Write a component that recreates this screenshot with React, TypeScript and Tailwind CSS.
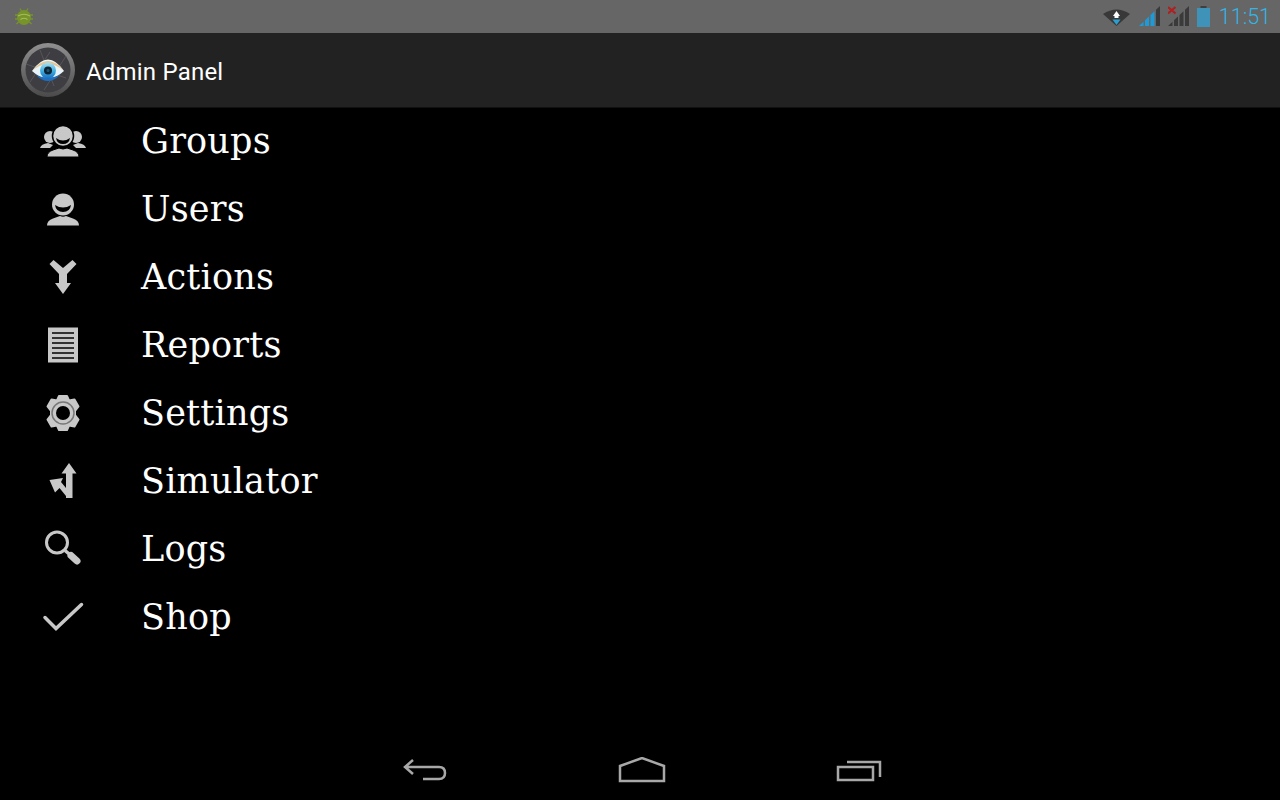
import type { ReactNode } from "react";

const GREY = "#c8c8c8";

function BugIcon() {
  return (
    <svg width="20" height="20" viewBox="0 0 20 20">
      <g stroke="#76942a" strokeWidth="1.300">
        <path d="M6 1.500 8 5M14 1.500 12 5M1 8h3M16 8h3M1 12h3M16 12h3M2.500 17l2.500-2.500M17.500 17 15 14.500" />
      </g>
      <ellipse cx="10" cy="10.500" rx="7" ry="7.500" fill="#76942a" />
      <path d="M4 9q6-3.500 12 0M6.500 12.500q3.500-2.500 7 0" stroke="#a6bc5c" strokeWidth="1.100" fill="none" />
    </svg>
  );
}

function WifiIcon() {
  return (
    <svg width="27" height="18" viewBox="0 0 27 18">
      <path d="M0 6Q13.500-3 27 6L13.500 18Z" fill="#383838" />
      <path d="M13.500 3l-3.500 5h7Z" fill="#fff" />
      <rect x="11.500" y="8" width="4" height="2" fill="#fff" />
      <path d="M13.500 17l-4-5.500h8Z" fill="#2a9fd0" />
    </svg>
  );
}

const bars = [
  { x0: 0, x1: 4.5 },
  { x0: 6, x1: 10 },
  { x0: 11.5, x1: 15.5 },
  { x0: 17, x1: 21 },
];

function SignalIcon({ active, x }: { active: boolean; x?: boolean }) {
  return (
    <svg width="21" height="21" viewBox="0 0 21 21">
      {bars.map((b, i) => (
        <path
          key={b.x0}
          d={`M${b.x0} 20L${b.x0} ${20 - b.x0 * 0.95}L${b.x1} ${20 - b.x1 * 0.95}L${b.x1} 20Z`}
          fill={active && i < 3 ? "#1e9ad6" : "#3a3a3a"}
        />
      ))}
      {x && <path d="M0 1l7.500 6.500M7.500 1 0 7.500" stroke="#b02020" strokeWidth="2.200" />}
    </svg>
  );
}

function BatteryIcon() {
  return (
    <svg width="13" height="21" viewBox="0 0 13 21">
      <rect x="3.500" y="0" width="6" height="3" fill="#3f3f3f" />
      <rect x="0" y="2" width="13" height="19" fill="#3f93b8" />
    </svg>
  );
}

function AppLogo() {
  return (
    <svg width="56" height="56" viewBox="0 0 56 56">
      <defs>
        <linearGradient id="ring" x1="0" y1="0" x2="0" y2="1">
          <stop offset="0" stopColor="#909090" />
          <stop offset="1" stopColor="#4a4a4a" />
        </linearGradient>
        <linearGradient id="iris" x1="0" y1="0" x2="0" y2="1">
          <stop offset="0" stopColor="#a8e2f4" />
          <stop offset="0.600" stopColor="#35a5dc" />
          <stop offset="1" stopColor="#1f6fc0" />
        </linearGradient>
      </defs>
      <circle cx="28" cy="28" r="27" fill="url(#ring)" />
      <circle cx="28" cy="28" r="22.500" fill="#3e3e42" />
      <path d="M10 40 30 10M20 8l14 36M46 14 24 48M6 22l40 14" stroke="#55555a" strokeWidth="1" />
      <path d="M12 29Q28 6 44 29Q28 44 12 29Z" fill="#e6f4fa" />
      <path d="M12 29Q28 9 44 29Q28 15 12 29Z" fill="#e8c48e" />
      <path d="M16 33Q28 45 40 33Q28 38 16 33Z" fill="#1f6fc0" />
      <circle cx="28" cy="28.500" r="8" fill="url(#iris)" />
      <circle cx="28" cy="28.500" r="4" fill="#0e2230" />
      <circle cx="28" cy="28.500" r="1.500" fill="#1a567c" />
    </svg>
  );
}

function GroupsIcon() {
  return (
    <svg width="48" height="36" viewBox="0 0 48 36" fill={GREY}>
      <circle cx="11" cy="14" r="6" />
      <circle cx="37" cy="14" r="6" />
      <path d="M1 25q1-4 8-5l5 2-3 3Z" />
      <path d="M47 25q-1-4-8-5l-5 2 3 3Z" />
      <circle cx="24" cy="13" r="10.500" stroke="#000" strokeWidth="1.500" />
      <path d="M17 15q7 5 14 0q-1 6-7 6t-7-6Z" fill="#000" />
      <path d="M8 34q0-5 6-7l6-2q4 2 8 0l6 2q6 2 6 7Z" stroke="#000" strokeWidth="1" />
    </svg>
  );
}

function UserIcon() {
  return (
    <svg width="36" height="36" viewBox="0 0 36 36" fill={GREY}>
      <circle cx="18" cy="13.500" r="11" />
      <path d="M10 14q8 5 16 0q-1 7-8 7t-8-7Z" fill="#000" />
      <path d="M2 34.500q0-5 6-7l7-2.500q3 1.500 6 0l7 2.500q6 2 6 7Z" />
    </svg>
  );
}

function ActionsIcon() {
  return (
    <svg width="36" height="36" viewBox="45 258 36 36" fill={GREY}>
      <path d="M49.500 263 53.500 259 63 267 72.500 259 76.500 263 67 273 67 282 71 282 63 293 55 282 59 282 59 273Z" />
    </svg>
  );
}

function ReportsIcon() {
  return (
    <svg width="36" height="36" viewBox="0 0 36 36">
      <rect x="3" y="0.500" width="30" height="35" fill={GREY} />
      {[6, 11, 16, 21, 26, 31].map((y) => (
        <rect key={y} x="7" y={y - 1} width="22" height="2" fill="#333" />
      ))}
    </svg>
  );
}

function SettingsIcon() {
  return (
    <svg width="36" height="38" viewBox="0 0 36 38" fill={GREY}>
      <path
        d="M14 2h8l2 4.500 5.500-1 4 7-3.500 4.500v4l3.500 4.500-4 7-5.500-1-2 4.500h-8l-2-4.500-5.500 1-4-7L6 21v-4L2.500 12.500l4-7 5.500 1Z"
        stroke={GREY}
        strokeWidth="2"
        strokeLinejoin="round"
      />
      <circle cx="18" cy="19" r="11" fill="none" stroke="#777" strokeWidth="1.500" />
      <circle cx="18" cy="19" r="7" fill="#000" />
    </svg>
  );
}

function SimulatorIcon() {
  return (
    <svg width="36" height="38" viewBox="45 462 36 38" fill={GREY}>
      <path d="M69 463 76.500 473.500 72.500 473.500 72.500 498 66 498 66 496 59.500 488 55 492.500 49.500 480 63 478 61 482 66 488 66 473.500 61.500 473.500Z" />
    </svg>
  );
}

function SearchIcon() {
  return (
    <svg width="40" height="40" viewBox="0 0 40 40" fill="none" stroke={GREY}>
      <circle cx="14" cy="13.500" r="10.500" strokeWidth="3" />
      <path d="M22 21.500l6 5" strokeWidth="3.500" />
      <path d="M28 26.500l6 5.500" strokeWidth="7" strokeLinecap="round" />
    </svg>
  );
}

function CheckIcon() {
  return (
    <svg width="42" height="32" viewBox="0 0 42 32" fill="none" stroke={GREY} strokeWidth="3.500" strokeLinecap="round">
      <path d="M3 16.500l11 11L39.500 3.500" />
    </svg>
  );
}

const items: { label: string; icon: ReactNode }[] = [
  { label: "Groups", icon: <GroupsIcon /> },
  { label: "Users", icon: <UserIcon /> },
  { label: "Actions", icon: <ActionsIcon /> },
  { label: "Reports", icon: <ReportsIcon /> },
  { label: "Settings", icon: <SettingsIcon /> },
  { label: "Simulator", icon: <SimulatorIcon /> },
  { label: "Logs", icon: <SearchIcon /> },
  { label: "Shop", icon: <CheckIcon /> },
];

export default function App() {
  return (
    <div className="flex h-[800px] w-[1280px] flex-col overflow-hidden bg-black">
      {/* Status bar */}
      <div className="flex h-[33px] items-center justify-between bg-[#666666] pl-[14px] pr-[9px]">
        <BugIcon />
        <div className="flex items-center">
          <WifiIcon />
          <div className="ml-[9px]"><SignalIcon active /></div>
          <div className="ml-[8px]"><SignalIcon active={false} x /></div>
          <div className="ml-[8px]"><BatteryIcon /></div>
          <span className="ml-[9px] font-['Roboto',sans-serif] text-[21.5px] leading-none font-light text-[#33b5e5]">11:51</span>
        </div>
      </div>

      {/* Action bar */}
      <div className="flex h-[75px] items-center border-b border-[#111] bg-[#222222] pl-[20px]">
        <AppLogo />
        <span className="ml-[10px] pt-[3px] font-['Roboto',sans-serif] text-[24px] tracking-[0.2px] text-white">Admin Panel</span>
      </div>

      {/* Menu */}
      <ul className="flex flex-1 flex-col">
        {items.map((item) => (
          <li key={item.label} className="flex h-[68px] items-center">
            <div className="flex w-[126px] justify-center pb-[3px]">{item.icon}</div>
            <span className="ml-[15px] pb-[2px] font-['DejaVu_Serif',serif] text-[35px] tracking-[0.2px] text-white">{item.label}</span>
          </li>
        ))}
      </ul>

      {/* Nav bar */}
      <div className="ml-[4px] flex h-[56px] items-center justify-center gap-[170px] pb-[4px]">
        <svg width="46" height="28" viewBox="0 0 46 28" fill="none" stroke="#a8a8a8" strokeWidth="2.500">
          <path d="M11 4 3 11l8 7M3 11h34q6 0 6 6t-6 6H21" />
        </svg>
        <svg width="48" height="26" viewBox="0 0 48 26" fill="none" stroke="#a8a8a8" strokeWidth="2.500">
          <path d="M2 24V9L24 1l22 8v15Z" />
        </svg>
        <svg width="46" height="24" viewBox="0 0 46 24" fill="none" stroke="#a8a8a8" strokeWidth="2.500">
          <rect x="2" y="9" width="35" height="13" />
          <path d="M11 4h33v15" />
        </svg>
      </div>
    </div>
  );
}
